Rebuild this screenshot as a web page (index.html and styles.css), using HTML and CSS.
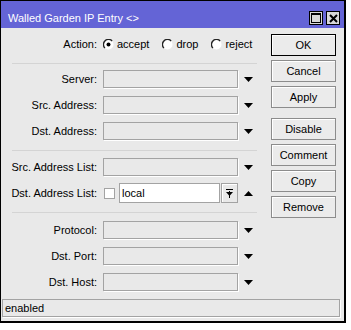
FILE: index.html
```html
<!DOCTYPE html>
<html lang="en">
  <head>
    <meta charset="UTF-8" />
    <title>Walled Garden IP Entry</title>
    <link rel="stylesheet" href="styles.css">
  </head>
  <body>
    <div class="window">
      <div class="titlebar">
        <span class="title">Walled Garden IP Entry &lt;&gt;</span>
        <div class="title-buttons">
          <span class="tbtn">
            <svg width="10" height="10" viewBox="0 0 10 10">
              <rect x="0.5" y="0.5" width="9" height="9" fill="none" stroke="#000" />
              <rect x="0" y="0" width="10" height="2" fill="#000" />
            </svg>
          </span>
          <span class="tbtn">
            <svg width="9" height="9" viewBox="0 0 9 9">
              <path d="M1 1 L8 8 M8 1 L1 8" stroke="#000" stroke-width="2" />
            </svg>
          </span>
        </div>
      </div>

      <div class="content">
        <div class="form">
          <div class="row action-row">
            <span class="label">Action:</span>
            <div class="radios">
              <span class="radio">
                <svg width="11" height="11" viewBox="0 0 11 11">
                  <circle cx="5.5" cy="5.5" r="5" fill="#fff" />
                  <path d="M1.9 9.1 A5 5 0 0 1 9.1 1.9" fill="none" stroke="#222" stroke-width="1.4" />
                  <circle cx="5.5" cy="5.5" r="2" fill="#000" />
                </svg>
                accept
              </span>
              <span class="radio">
                <svg width="11" height="11" viewBox="0 0 11 11">
                  <circle cx="5.5" cy="5.5" r="5" fill="#fff" />
                  <path d="M1.9 9.1 A5 5 0 0 1 9.1 1.9" fill="none" stroke="#222" stroke-width="1.4" />
                </svg>
                drop
              </span>
              <span class="radio">
                <svg width="11" height="11" viewBox="0 0 11 11">
                  <circle cx="5.5" cy="5.5" r="5" fill="#fff" />
                  <path d="M1.9 9.1 A5 5 0 0 1 9.1 1.9" fill="none" stroke="#222" stroke-width="1.4" />
                </svg>
                reject
              </span>
            </div>
          </div>

          <div class="sep"></div>

          <div class="group">
            <div class="row">
              <span class="label">Server:</span>
              <span class="field"></span>
              <span class="arrow"><svg width="9" height="5" viewBox="0 0 9 5"><polygon points="0,0 9,0 4.5,5" fill="#000" /></svg></span>
            </div>
            <div class="row">
              <span class="label">Src. Address:</span>
              <span class="field"></span>
              <span class="arrow"><svg width="9" height="5" viewBox="0 0 9 5"><polygon points="0,0 9,0 4.5,5" fill="#000" /></svg></span>
            </div>
            <div class="row">
              <span class="label">Dst. Address:</span>
              <span class="field"></span>
              <span class="arrow"><svg width="9" height="5" viewBox="0 0 9 5"><polygon points="0,0 9,0 4.5,5" fill="#000" /></svg></span>
            </div>
          </div>

          <div class="sep sep-mid"></div>

          <div class="group">
            <div class="row">
              <span class="label">Src. Address List:</span>
              <span class="field"></span>
              <span class="arrow"><svg width="9" height="5" viewBox="0 0 9 5"><polygon points="0,0 9,0 4.5,5" fill="#000" /></svg></span>
            </div>
            <div class="row">
              <span class="label">Dst. Address List:</span>
              <span class="field-combo">
                <span class="check"></span>
                <span class="input">local</span>
                <span class="combo-btn">
                  <svg width="7" height="9" viewBox="0 0 7 9">
                    <rect x="0" y="0" width="7" height="1" fill="#000" />
                    <polygon points="0,3 7,3 3.5,7" fill="#000" />
                    <rect x="3" y="2" width="1" height="7" fill="#000" />
                  </svg>
                </span>
              </span>
              <span class="arrow"><svg width="9" height="5" viewBox="0 0 9 5"><polygon points="0,5 9,5 4.5,0" fill="#000" /></svg></span>
            </div>
          </div>

          <div class="sep sep-low"></div>

          <div class="group">
            <div class="row">
              <span class="label">Protocol:</span>
              <span class="field"></span>
              <span class="arrow"><svg width="9" height="5" viewBox="0 0 9 5"><polygon points="0,0 9,0 4.5,5" fill="#000" /></svg></span>
            </div>
            <div class="row">
              <span class="label">Dst. Port:</span>
              <span class="field"></span>
              <span class="arrow"><svg width="9" height="5" viewBox="0 0 9 5"><polygon points="0,0 9,0 4.5,5" fill="#000" /></svg></span>
            </div>
            <div class="row">
              <span class="label">Dst. Host:</span>
              <span class="field"></span>
              <span class="arrow"><svg width="9" height="5" viewBox="0 0 9 5"><polygon points="0,0 9,0 4.5,5" fill="#000" /></svg></span>
            </div>
          </div>
        </div>

        <div class="buttons">
          <button class="default">OK</button>
          <button>Cancel</button>
          <button>Apply</button>
          <button class="spaced">Disable</button>
          <button>Comment</button>
          <button>Copy</button>
          <button>Remove</button>
        </div>
      </div>

      <div class="status">enabled</div>
    </div>
  </body>
</html>
```

FILE: styles.css
```css
body {
  margin: 0;
  background-color: #fff;
  font-family: "Liberation Sans", Arial, sans-serif;
  font-size: 11px;
  color: #000;
}
.window {
  width: 343px;
  background-color: #e9e9e9;
  border: 1px solid #000;
  border-right-width: 2px;
  border-bottom-width: 2px;
  padding-bottom: 4px;
}
.titlebar {
  height: 20px;
  padding: 7px 4px 0 7px;
  background-color: #6464d6;
  display: flex;
  align-items: center;
  justify-content: space-between;
}
.title {
  color: #fff;
  font-size: 11px;
}
.title-buttons {
  display: flex;
  gap: 3px;
}
.tbtn {
  width: 12px;
  height: 12px;
  border: 1px solid #000;
  background-color: #d8d8d8;
  display: flex;
  align-items: center;
  justify-content: center;
}
.content {
  display: flex;
}
.form {
  width: 270px;
  padding-top: 7px;
}
.row {
  display: flex;
  align-items: center;
  height: 18px;
}
.group .row + .row {
  margin-top: 8px;
}
.label {
  width: 96px;
  text-align: right;
  white-space: nowrap;
}
.radios {
  display: flex;
  margin-left: 6px;
}
.radio {
  display: flex;
  align-items: center;
  gap: 3px;
  margin-right: 13px;
}
.field {
  width: 133px;
  height: 16px;
  margin-left: 6px;
  border: 1px solid #a3a3a3;
  box-shadow: 1px 1px 0 #fff;
}
.arrow {
  width: 10px;
  margin-left: 5px;
  display: flex;
  align-items: center;
  justify-content: center;
}
.field-combo {
  width: 135px;
  height: 20px;
  margin-left: 6px;
  display: flex;
  align-items: center;
}
.check {
  width: 9px;
  height: 9px;
  margin-left: 1px;
  margin-right: 4px;
  background-color: #fff;
  border: 1px solid #a3a3a3;
}
.input {
  width: 97px;
  height: 18px;
  line-height: 18px;
  padding-left: 2px;
  background-color: #fff;
  border: 1px solid #a3a3a3;
}
.combo-btn {
  width: 15px;
  height: 18px;
  margin-left: 1px;
  border: 1px solid #a3a3a3;
  box-shadow: inset 1px 1px 0 #fff;
  display: flex;
  align-items: center;
  justify-content: center;
}
.sep {
  width: 245px;
  margin: 10px 0 6px 11px;
  border-top: 1px solid #d4d4d4;
}
.sep-mid {
  margin-bottom: 7px;
}
.sep-low {
  margin-bottom: 8px;
}
.buttons {
  width: 65px;
  padding-top: 6px;
  display: flex;
  flex-direction: column;
  gap: 4px;
}
button {
  height: 22px;
  padding: 0;
  font-family: "Liberation Sans", Arial, sans-serif;
  font-size: 11px;
  color: #000;
  background-color: #ebebeb;
  border: 1px solid #8c8c8c;
  box-shadow: inset 1px 1px 0 #fff;
}
button.default {
  border-color: #000;
}
button.spaced {
  margin-top: 6px;
}
.status {
  height: 16px;
  line-height: 16px;
  margin: 8px 4px 0 1px;
  padding-left: 2px;
  border: 1px solid #a3a3a3;
  box-shadow: 1px 1px 0 #fff;
}
```
